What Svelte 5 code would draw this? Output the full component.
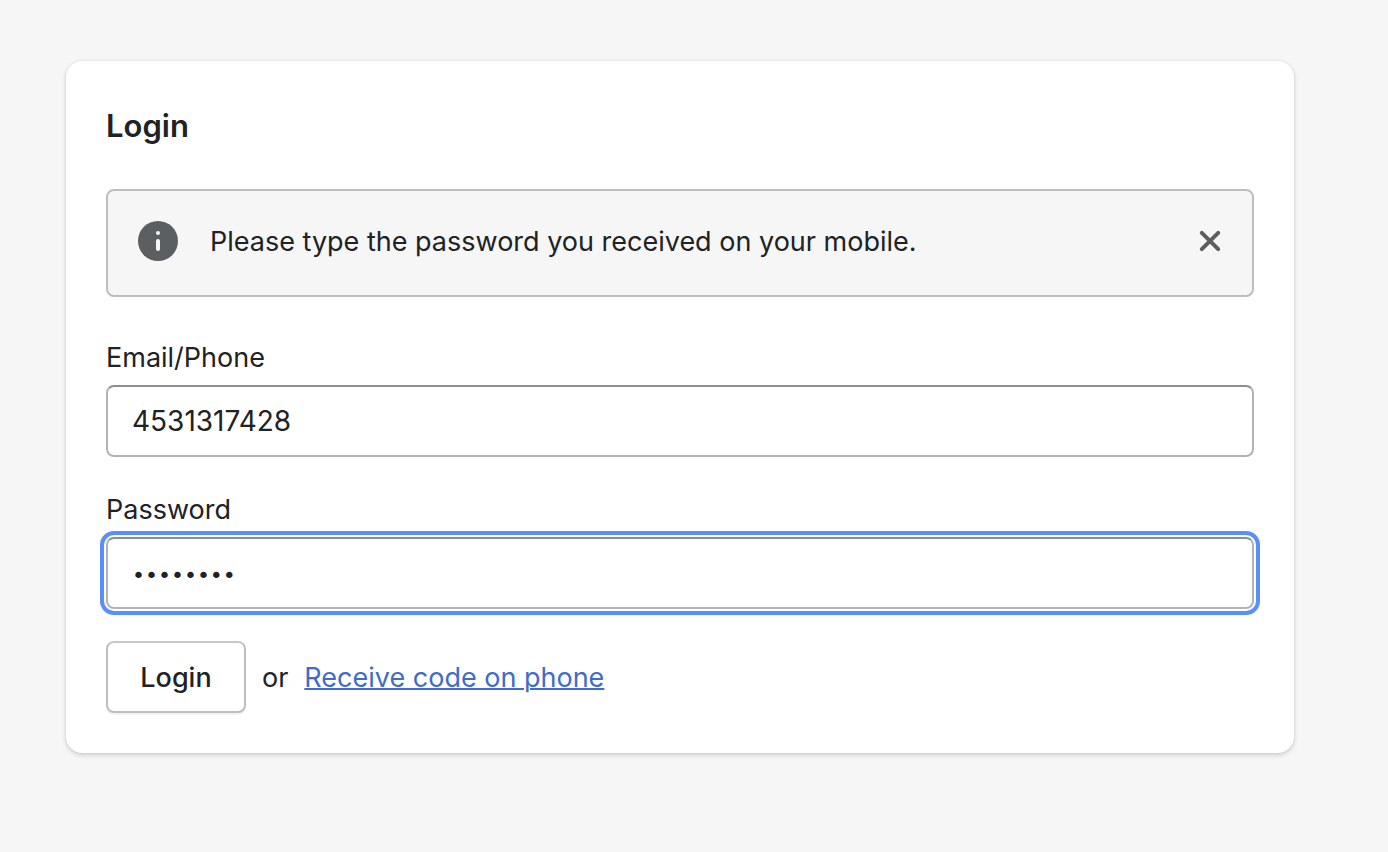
<script>
  let phone = $state('4531317428');
  let password = $state('12345678');
  let showNotice = $state(true);
</script>

<main>
  <form class="card" onsubmit={(e) => e.preventDefault()}>
    <h1>Login</h1>

    {#if showNotice}
      <div class="notice" role="status">
        <svg class="info" viewBox="0 0 40 40" aria-hidden="true">
          <circle cx="20" cy="20" r="20" fill="#5c5f62" />
          <circle cx="20" cy="12" r="2" fill="#f6f6f6" />
          <rect x="18" y="18" width="4" height="12" rx="2" fill="#f6f6f6" />
        </svg>
        <p>Please type the password you received on your mobile.</p>
        <button class="close" type="button" aria-label="Dismiss" onclick={() => (showNotice = false)}>
          <svg viewBox="0 0 24 24" aria-hidden="true">
            <path d="M3.8 3.8 20.2 20.2M20.2 3.8 3.8 20.2" fill="none" stroke="#5c5f62" stroke-width="4" stroke-linecap="round" />
          </svg>
        </button>
      </div>
    {/if}

    <div class="field">
      <label for="phone">Email/Phone</label>
      <input id="phone" type="text" bind:value={phone} />
    </div>

    <div class="field">
      <label for="password">Password</label>
      <input id="password" class="active" type="password" bind:value={password} />
    </div>

    <div class="actions">
      <button class="submit" type="submit">Login</button>
      <span>or</span>
      <a href="#code">Receive code on phone</a>
    </div>
  </form>
</main>

<style>
  :global(body) {
    background: #f6f6f6;
  }

  main {
    padding: 61px 94px 40px 66px;
    font-family: Inter, sans-serif;
    font-size: 27px;
    line-height: 42px;
    color: #202223;
  }

  .card {
    display: flex;
    flex-direction: column;
    padding: 40px;
    background: #fff;
    border-radius: 16px;
    box-shadow: 0 0 2px rgba(23, 24, 24, 0.1), 0 2px 5px rgba(0, 0, 0, 0.16);
  }

  h1 {
    margin: 0 0 38px;
    font-size: 31px;
    font-weight: 600;
    line-height: 50px;
  }

  .notice {
    display: flex;
    align-items: flex-start;
    gap: 32px;
    margin-bottom: 40px;
    padding: 30px;
    padding-bottom: 32px;
    background: #f6f6f6;
    border: 2px solid #babfc3;
    border-radius: 8px;
  }

  .info {
    flex: none;
    width: 40px;
    height: 40px;
  }

  .notice p {
    flex: 1;
    margin: 0;
  }

  .close {
    display: flex;
    padding: 8px 0;
    background: none;
    border: 0;
    cursor: pointer;
  }

  .close svg {
    width: 24px;
    height: 24px;
  }

  .field {
    display: flex;
    flex-direction: column;
    gap: 6px;
    margin-bottom: 32px;
  }

  input {
    box-sizing: border-box;
    width: 100%;
    height: 72px;
    padding: 0 24px;
    font: inherit;
    font-size: 28px;
    color: inherit;
    background: #fff;
    border: 2px solid #aeb4b9;
    border-top-color: #898f94;
    border-radius: 8px;
    outline: none;
  }

  .active {
    padding-top: 4px;
    font-family: "DejaVu Sans", sans-serif;
    font-size: 22px;
    box-shadow: 0 0 0 2px #fff, 0 0 0 6px #598ffa;
  }

  .actions {
    display: flex;
    align-items: baseline;
    gap: 16px;
  }

  .submit {
    min-width: 140px;
    height: 72px;
    padding: 2px 32px 0;
    font: inherit;
    font-weight: 500;
    color: inherit;
    background: #fff;
    border: 2px solid #babfc3;
    border-top-color: #c5c9cc;
    border-radius: 8px;
    box-shadow: 0 2px 0 rgba(0, 0, 0, 0.05);
  }

  a {
    color: #3f6cc8;
    text-decoration: underline;
    text-decoration-thickness: 2px;
  }
</style>
